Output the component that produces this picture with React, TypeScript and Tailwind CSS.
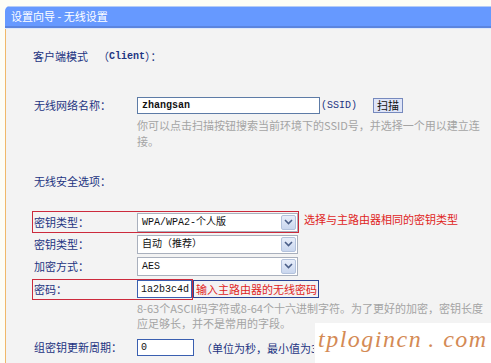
import React from 'react';

const cjk = "font-['Noto_Sans_CJK_SC','Noto_Sans',sans-serif]";
const mono = "font-['Liberation_Mono','Noto_Sans_CJK_SC',monospace]";

function Chevron() {
  return (
    <div className="w-[15px] h-[15px] mr-[1px] flex items-center justify-center rounded-[2px] border border-[#b3c2dc] bg-gradient-to-b from-[#e8eefa] to-[#c9d6ee]">
      <svg width="9" height="6" viewBox="0 0 9 6">
        <path d="M1 1 L4.5 4.5 L8 1" fill="none" stroke="#4a5e88" strokeWidth="1.6" />
      </svg>
    </div>
  );
}

function Select({ value }: { value: string }) {
  return (
    <div className="w-[161px] h-[19px] flex items-center justify-between bg-white border border-[#a9b0bd]">
      <span className={`${mono} text-[10px] text-[#111] pl-[4px] whitespace-nowrap`}>{value}</span>
      <Chevron />
    </div>
  );
}

function Label({ children }: { children: React.ReactNode }) {
  return (
    <div className={`w-[104px] pl-[1px] ${cjk} text-[11px] text-[#1d3482] whitespace-nowrap`}>{children}</div>
  );
}

export default function App() {
  return (
    <div className="w-[491px] h-[363px] overflow-hidden relative bg-[#fdfdf6] pt-[6px] pl-[5px] flex flex-col">
      {/* title bar */}
      <div className="rounded-tl-[5px] overflow-hidden">
        <div className="h-[20px] bg-[#6699ff] border-t border-[#b4cbf6] flex items-center pl-[6px]">
          <span className={`${cjk} text-[11px] text-white whitespace-nowrap`}>设置向导 - 无线设置</span>
        </div>
        <div className="h-[2px] bg-[#5b85df]" />
        <div className="h-[1px] bg-[#dde8fb]" />
      </div>

      {/* body */}
      <div className="flex-1 bg-[#f3f3f3] border-l border-[#f0b86a] pl-[26px] flex flex-col">
        <div className={`mt-[17px] h-[20px] flex items-center ${cjk} text-[11px] text-[#1d3482] whitespace-nowrap`}>
          <span className="pl-[1px]">客户端模式</span>
          <span className="ml-[10px]">（</span>
          <span className={`${mono} text-[10px] font-bold`}>Client</span>
          <span>）：</span>
        </div>

        <div className="mt-[29px] h-[20px] flex items-center border border-transparent">
          <Label>无线网络名称：</Label>
          <div className="w-[183px] h-[17px] bg-white border border-[#5d7ba6] flex items-center pl-[4px]">
            <span className={`${mono} text-[10px] font-bold text-[#111]`}>zhangsan</span>
          </div>
          <span className={`${mono} text-[10px] text-[#1d3482] ml-[1px]`}>(SSID)</span>
          <div className={`ml-[16px] h-[15px] px-[3px] flex items-center bg-[#dfe5f8] border border-[#7689bd] ${cjk} text-[11px] text-[#111]`}>扫描</div>
        </div>

        <div className={`mt-[2px] pl-[105px] ${cjk} text-[11px] leading-[16px] text-[#a4a4a4] whitespace-nowrap`}>
          <div>你可以点击扫描按钮搜索当前环境下的SSID号，并选择一个用以建立连</div>
          <div>接。</div>
        </div>

        <div className={`mt-[22px] h-[20px] flex items-center pl-[2px] ${cjk} text-[11px] text-[#1d3482]`}>无线安全选项：</div>

        <div className="mt-[20px] h-[22px] flex items-center">
          <div className="h-[22px] flex items-center border border-[#cc2a3c]">
            <Label>密钥类型：</Label>
            <Select value="WPA/WPA2-个人版" />
          </div>
          <span className={`ml-[5px] mb-[6px] ${cjk} text-[11px] text-[#e0241c] whitespace-nowrap`}>选择与主路由器相同的密钥类型</span>
        </div>

        <div className="h-[22px] flex items-center border border-transparent">
          <Label>密钥类型：</Label>
          <Select value="自动（推荐）" />
        </div>

        <div className="h-[22px] flex items-center border border-transparent">
          <Label>加密方式：</Label>
          <Select value="AES" />
        </div>

        <div className="mt-[1px] h-[22px] flex items-center">
          <div className="h-[21px] flex items-center border border-[#cc2a3c]">
            <Label>密码：</Label>
            <div className="w-[55px] h-[18px] bg-white border border-[#3a5fb0] flex items-center pl-[3px]">
              <span className={`${mono} text-[10px] text-[#111]`}>1a2b3c4d</span>
            </div>
          </div>
          <div className={`w-[126px] h-[18px] flex items-center pl-[2px] border border-[#2b4596] ${cjk} text-[11px] text-[#e0241c] whitespace-nowrap`}>输入主路由器的无线密码</div>
        </div>

        <div className={`mt-[1px] pl-[105px] ${cjk} text-[11px] leading-[15px] text-[#a4a4a4] whitespace-nowrap`}>
          <div>8-63个ASCII码字符或8-64个十六进制字符。为了更好的加密，密钥长度</div>
          <div>应足够长，并不是常用的字段。</div>
        </div>

        <div className="mt-[7px] h-[18px] flex items-center border border-transparent">
          <Label>组密钥更新周期：</Label>
          <div className="w-[57px] h-[17px] bg-white border border-[#3a5fb0] flex items-center pl-[3px]">
            <span className={`${mono} text-[10px] text-[#111]`}>0</span>
          </div>
          <div className="ml-[7px] w-[113px] overflow-hidden">
            <span className={`${cjk} text-[11px] text-[#1d3482] whitespace-nowrap`}>（单位为秒，最小值为30，0表示不更新）</span>
          </div>
        </div>
      </div>

      {/* watermark */}
      <div className="absolute left-[315px] top-[323px] w-[176px] h-[40px] bg-white flex items-start pt-[4px] pl-[3px]">
        <span className="font-['Liberation_Serif',serif] italic text-[24px] leading-none tracking-[1.5px] text-[#d48a55] whitespace-nowrap">tplogincn</span>
        <span className="ml-[6px] font-['Liberation_Serif',serif] italic text-[24px] leading-none tracking-[1.5px] text-[#d48a55] whitespace-nowrap">. com</span>
      </div>
    </div>
  );
}
